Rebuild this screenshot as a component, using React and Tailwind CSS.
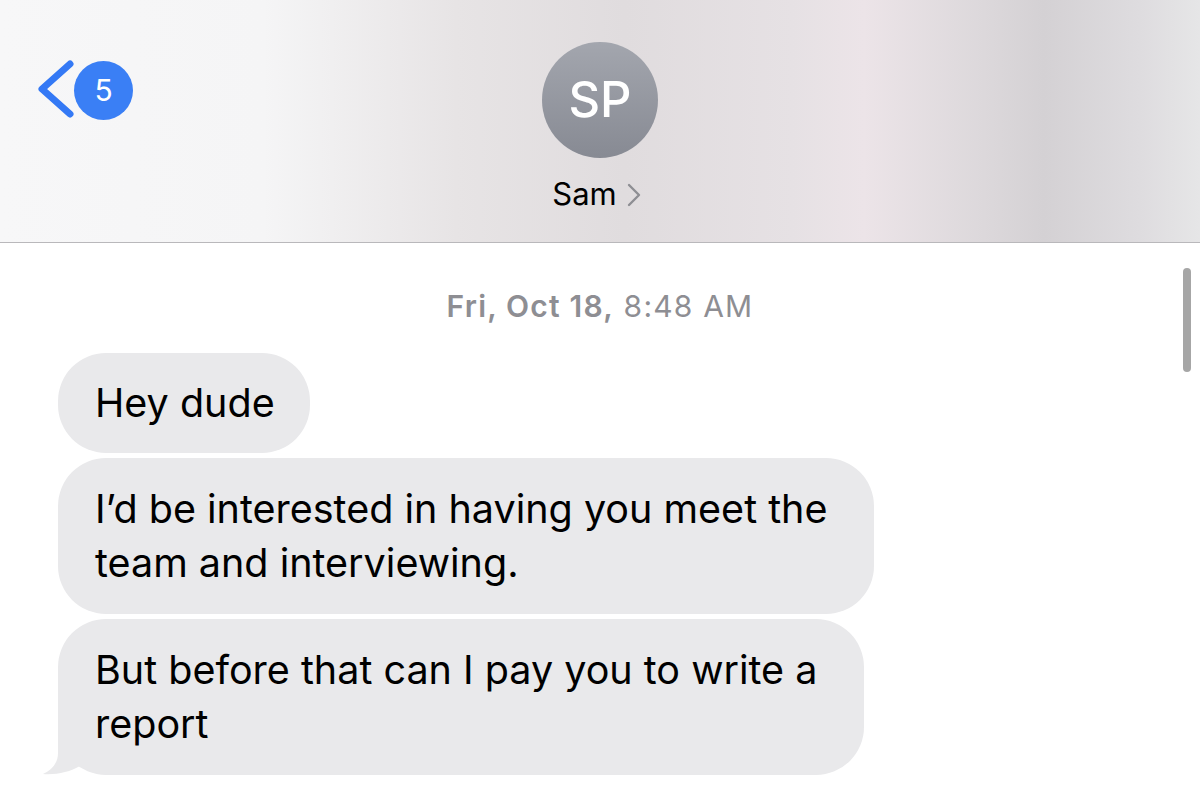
const font = { fontFamily: 'Inter, "Noto Sans", sans-serif' };

const Bubble = ({ lines, tail, single }) => (
  <div
    className={`relative w-fit rounded-[48px] bg-[#e9e9eb] pl-[37px] text-[39.5px] leading-[54px] text-black whitespace-nowrap ${
      single ? 'py-[23px] pr-[35px]' : 'py-[24px] pr-[47px]'
    }`}
  >
    {tail && (
      <svg
        className="absolute -left-[18px] bottom-0"
        width="70"
        height="54"
        viewBox="40 720 70 54"
      >
        <path
          d="M58 720 L58 752 C58 762 52 769 43 773 C56 774 70 771 80 765 C88 770 98 773 110 773 L110 720 Z"
          fill="#e9e9eb"
        />
      </svg>
    )}
    <div className="relative">
      {lines.map((l, i) => (
        <div key={i}>{l}</div>
      ))}
    </div>
  </div>
);

export default function App() {
  return (
    <div className="relative w-[1200px] h-[799px] overflow-hidden bg-white" style={font}>
      <header className="relative h-[243px] border-b border-[#b9b8bb] bg-[linear-gradient(90deg,#f7f7f8_0%,#f5f5f6_22%,#e7e4e5_38%,#e0dcde_52%,#e6e1e4_66%,#ece4e8_72%,#dcd8db_82%,#d4d1d4_87%,#dedcdf_95%,#e6e6e7_100%)]">
        <div className="absolute left-[36px] top-[60px] flex items-center">
          <svg width="40" height="60" viewBox="0 0 40 60">
            <path
              d="M34 4 L6 29 L34 54"
              fill="none"
              stroke="#3479f5"
              strokeWidth="7"
              strokeLinecap="round"
              strokeLinejoin="round"
            />
          </svg>
          <div className="-ml-[2px] flex h-[59px] w-[59px] items-center justify-center rounded-full bg-[#3a7ff5] text-[30px] text-white">
            5
          </div>
        </div>
        <div className="flex flex-col items-center pt-[42px]">
          <div className="flex h-[116px] w-[116px] items-center justify-center rounded-full bg-[linear-gradient(180deg,#a3a6ae,#878a93)] text-[49px] font-medium text-white">
            SP
          </div>
          <div className="mt-[16px] -ml-[7px] flex items-center text-[31px] leading-[40px] text-black">
            <span>Sam</span>
            <svg className="ml-[10px] mt-[2px]" width="14" height="24" viewBox="0 0 14 24">
              <path
                d="M2 2 L12 12 L2 22"
                fill="none"
                stroke="#8e8e93"
                strokeWidth="2.4"
                strokeLinecap="round"
                strokeLinejoin="round"
              />
            </svg>
          </div>
        </div>
      </header>

      <div className="absolute right-[9px] top-[268px] h-[104px] w-[8px] rounded-full bg-[#a6a6a6]" />

      <main className="pl-[58px] pt-[44px]">
        <div className="pr-[58px] text-center text-[30px] leading-[38px] tracking-[1.2px] text-[#8e8e93]">
          <span className="font-semibold">Fri, Oct 18,</span> 8:48 AM
        </div>
        <div className="mt-[28px] flex flex-col gap-[5px]">
          <Bubble single lines={['Hey dude']} />
          <Bubble lines={['I’d be interested in having you meet the', 'team and interviewing.']} />
          <Bubble lines={['But before that can I pay you to write a', 'report']} tail />
        </div>
      </main>
    </div>
  );
}
